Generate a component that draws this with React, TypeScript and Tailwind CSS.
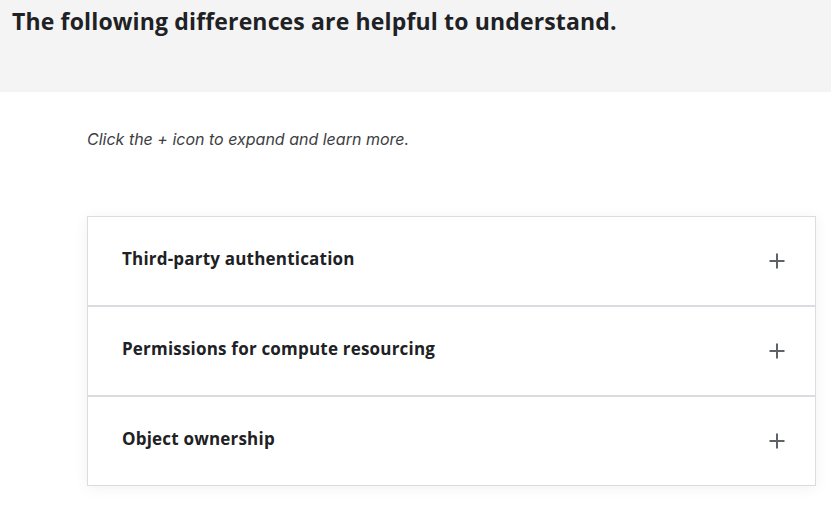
import React from "react";

const items = [
  "Third-party authentication",
  "Permissions for compute resourcing",
  "Object ownership",
];

function Plus() {
  return (
    <svg width="16" height="16" viewBox="0 0 16 16" className="shrink-0">
      <path d="M8 0.5V15.5M0.5 8H15.5" stroke="#5f6368" strokeWidth="2" fill="none" />
    </svg>
  );
}

export default function App() {
  return (
    <div className="min-h-[523px] w-full bg-white" style={{ fontFamily: "'Open Sans', Roboto, sans-serif" }}>
      <div className="h-[92px] bg-[#f4f4f4] px-3 pt-[5px]">
        <h1 className="text-[23px] font-bold leading-[32px] tracking-[0.15px] text-[#202124]">
          The following differences are helpful to understand.
        </h1>
      </div>
      <div className="pl-[87px] pr-4 pt-[35px]">
        <p className="font-['Inter',sans-serif] text-[16px] italic leading-[24px] text-[#3c4043]">
          Click the + icon to expand and learn more.
        </p>
        <div className="mt-[65px] w-[729px] border border-[#dadce0] bg-white shadow-[0_2px_14px_rgba(0,0,0,0.06)]">
          {items.map((t, i) => (
            <div
              key={t}
              className={`flex items-center justify-between pl-[34px] pr-[30px] ${i > 0 ? "h-[90px] border-t-2 border-[#dadce0]" : "h-[88px]"}`}
            >
              <span className="-mt-[4px] text-[17px] font-bold tracking-[0.2px] text-[#202124]">{t}</span>
              <Plus />
            </div>
          ))}
        </div>
      </div>
    </div>
  );
}
